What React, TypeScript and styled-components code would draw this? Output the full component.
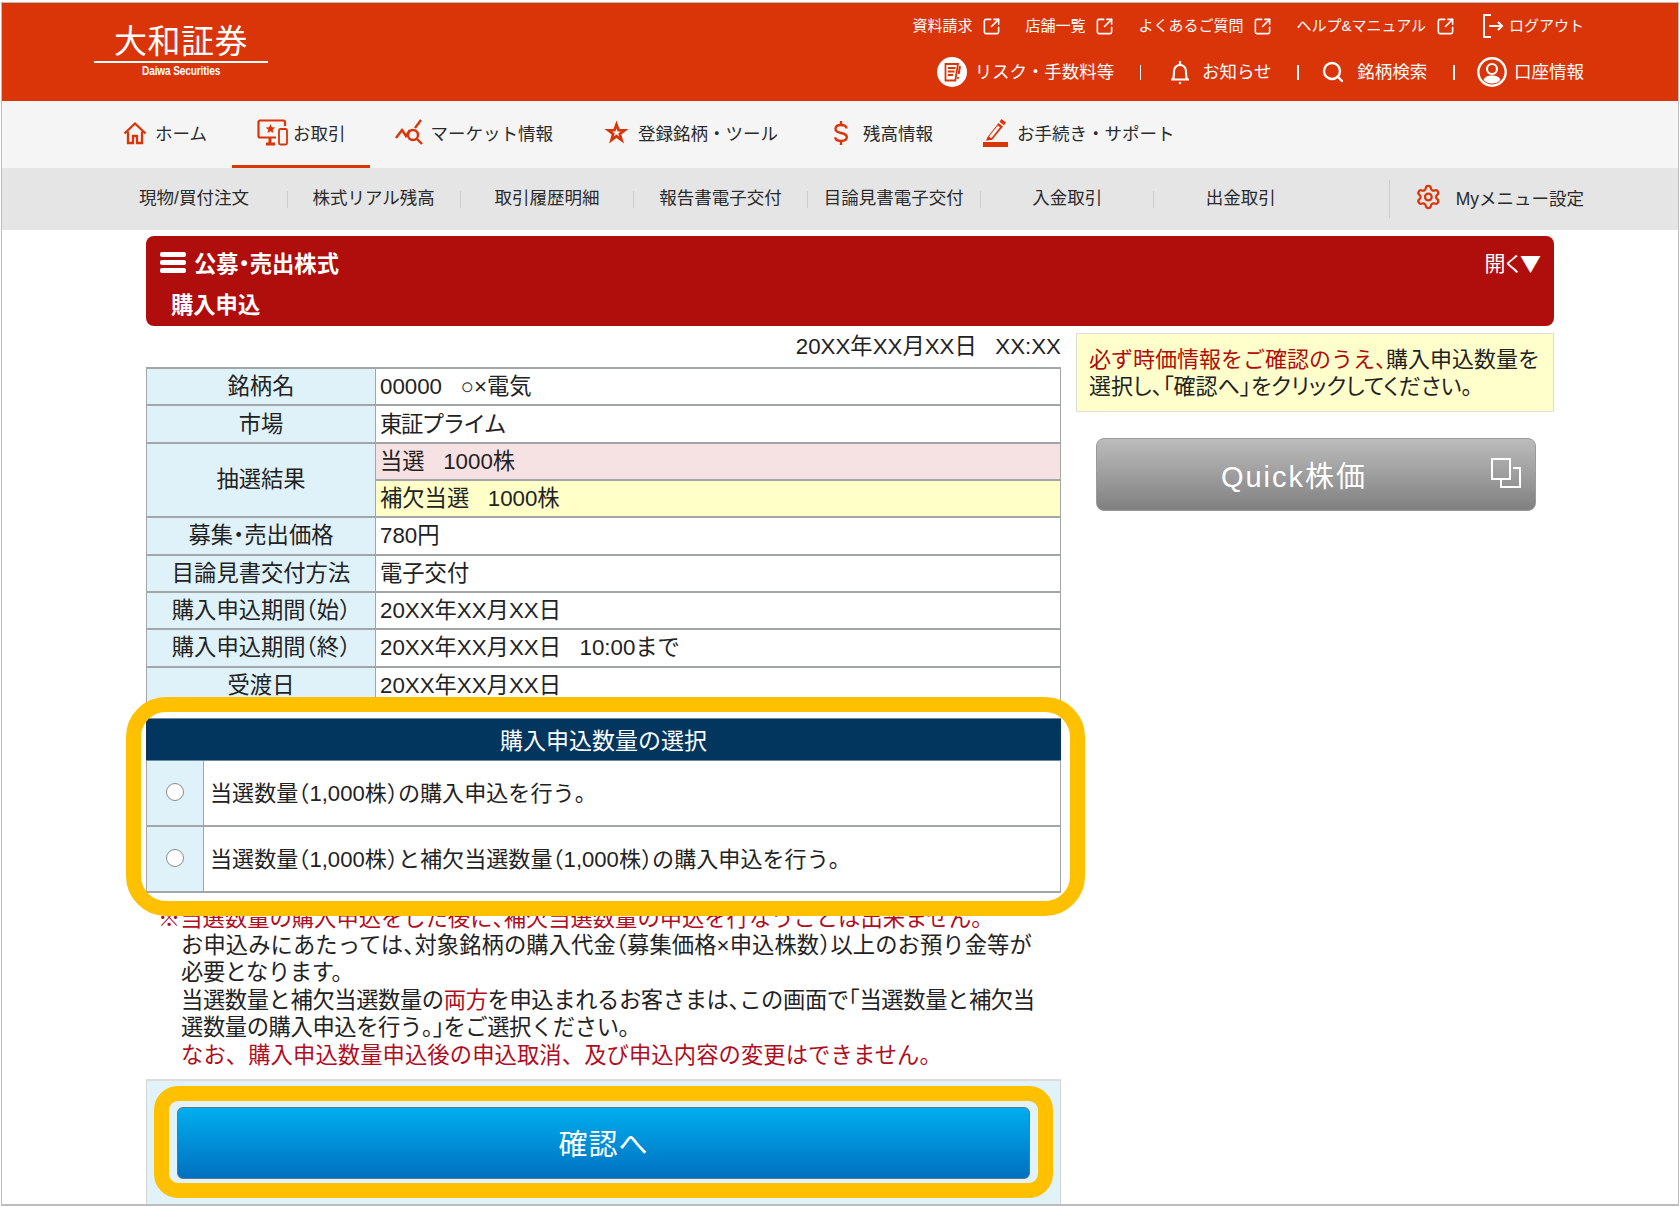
import React from 'react'
import styled, { createGlobalStyle } from 'styled-components'
import { Search, Settings, SquareArrowOutUpRight } from 'lucide-react'

const RED = '#da3409'
const GRID_LINE = '#a3a6a8'
const CJK = '"Noto Sans CJK JP", sans-serif'
const JP = `"Liberation Sans", ${CJK}`

const GlobalStyle = createGlobalStyle`
    html, body {
        margin: 0;
        padding: 0;
        background: #fff;
    }
    body {
        font-family: ${JP};
        color: #222;
    }
`

/* ---------- header ---------- */

const Shell = styled.div`
    box-sizing: border-box;
    width: 1678px;
    height: 1204px;
    margin: 2px 0 0 1px;
    border: 1px solid #bdbdbd;
    border-bottom-width: 2px;
    overflow: hidden;
    background: #fff;
`

const Header = styled.header`
    height: 98px;
    background: ${RED};
    display: flex;
    justify-content: space-between;
    color: #fff;
`

const Logo = styled.div`
    width: 174px;
    margin-left: 92px;
    display: flex;
    flex-direction: column;
    align-items: center;
`

const LogoName = styled.div`
    height: 60px;
    width: 100%;
    text-align: center;
    font-size: 33px;
    line-height: 38px;
    padding-top: 20px;
    box-sizing: border-box;
    letter-spacing: 0.5px;
    border-bottom: 2px solid #fff;
`

const LogoSub = styled.div`
    font-weight: 700;
    font-size: 13px;
    line-height: 14px;
    margin-top: 1px;
    letter-spacing: -0.2px;
    white-space: nowrap;
    transform: scaleX(0.78);
`

const HeaderTools = styled.div`
    display: flex;
    flex-direction: column;
    align-items: flex-end;
    padding: 11px 94px 0 0;
    gap: 19px;
`

const ToolRow = styled.div`
    height: 24px;
    display: flex;
    align-items: center;
`

const UtilRow = styled.div`
    height: 30px;
    display: flex;
    align-items: center;
`

const ToolLink = styled.a<{ $gap?: number; $left?: number }>`
    display: flex;
    align-items: center;
    gap: ${(p) => p.$gap ?? 10}px;
    margin-left: ${(p) => p.$left ?? 24}px;
    font-size: 15px;
    line-height: 22px;
    white-space: nowrap;
`

const UtilLink = styled.a<{ $gap: number; $left?: number }>`
    display: flex;
    align-items: center;
    gap: ${(p) => p.$gap}px;
    margin-left: ${(p) => p.$left ?? 0}px;
    font-size: 17.5px;
    line-height: 24px;
    white-space: nowrap;
`

const UtilSep = styled.span`
    width: 1.5px;
    height: 15px;
    background: #fff;
    margin: 0 22.5px 0 25.7px;
`

/* ---------- main nav ---------- */

const Nav = styled.nav`
    height: 67px;
    background: #f5f5f5;
    display: flex;
    padding-left: 96px;
`

const NavItem = styled.a<{ $active?: boolean; $gap: number; $left?: number }>`
    box-sizing: border-box;
    height: 67px;
    display: flex;
    align-items: center;
    padding: 0 25px 1px;
    margin-left: ${(p) => p.$left ?? 0}px;
    gap: ${(p) => p.$gap}px;
    font-size: 17.5px;
    color: #2a2a2a;
    white-space: nowrap;
    border-bottom: 3px solid ${(p) => (p.$active ? RED : 'transparent')};
`

/* ---------- sub nav ---------- */

const SubNav = styled.div`
    height: 62px;
    background: #e5e5e5;
    display: flex;
    align-items: center;
    justify-content: space-between;
    padding-left: 99.5px;
    padding-right: 94px;
`

const SubGrid = styled.div`
    display: grid;
    grid-template-columns: 185px repeat(6, 173.4px);
`

const SubCell = styled.a`
    height: 17px;
    line-height: 15px;
    font-size: 17.5px;
    text-align: center;
    color: #2a2a2a;
    white-space: nowrap;
    & + & {
        border-left: 1px solid #cdcdcd;
    }
`

const MenuSetting = styled.a`
    width: 195px;
    height: 38px;
    box-sizing: border-box;
    border-left: 1px solid #cdcdcd;
    display: flex;
    align-items: center;
    padding: 0 0 4px 25px;
    gap: 14px;
    font-size: 17.5px;
    white-space: nowrap;
    color: #2a2a2a;
`

/* ---------- page body ---------- */

const Content = styled.main`
    width: 1408px;
    margin: 6px 0 0 144px;
`

const TitleBar = styled.div`
    height: 90px;
    box-sizing: border-box;
    background: #b00d0d;
    border-radius: 8px;
    color: #fff;
    padding: 12px 13px 0 14px;
    font-weight: 700;
`

const TitleTop = styled.div`
    display: flex;
    align-items: center;
    justify-content: space-between;
    height: 28px;
    font-size: 22.3px;
`

const TitleName = styled.div`
    display: flex;
    align-items: center;
    gap: 8px;
`

const TitleToggle = styled.span`
    font-family: ${CJK};
    font-size: 21px;
    font-weight: 400;
`

const ToggleLabel = styled.span`
    font-feature-settings: "palt";
`

const TitleSub = styled.div`
    margin: 16px 0 0 11px;
    font-size: 22.3px;
    line-height: 28px;
`

const Columns = styled.div`
    display: grid;
    grid-template-columns: 915px 478px;
    gap: 15px;
`

const LeftColumn = styled.div`
    min-width: 0;
`

const Stamp = styled.div`
    height: 41px;
    text-align: right;
    font-size: 22.3px;
    line-height: 41px;
    white-space: pre;
`

const InfoGrid = styled.div`
    display: grid;
    grid-template-columns: 228px 1fr;
    grid-auto-rows: 35.33px;
    gap: 2px 1px;
    padding: 0 1px;
    border-top: 2px solid ${GRID_LINE};
    background: ${GRID_LINE};
    height: 335px;
    overflow: hidden;
`

const InfoLabel = styled.div<{ $span?: number }>`
    grid-row: span ${(p) => p.$span ?? 1};
    background: #e0f2f9;
    display: flex;
    align-items: center;
    justify-content: center;
    font-size: 22.3px;
    padding-bottom: 5px;
`

const InfoValue = styled.div<{ $bg?: string; $track?: number }>`
    background: ${(p) => p.$bg ?? '#fff'};
    display: flex;
    align-items: center;
    padding: 0 0 5px 4px;
    font-size: 22.3px;
    letter-spacing: ${(p) => p.$track ?? 0}px;
    white-space: pre;
`

const Picker = styled.section`
    position: relative;
    margin-top: 14px;
`

const PickerHead = styled.div`
    height: 43px;
    background: #02365f;
    color: #fff;
    border-top: 1px solid #6f8aa0;
    box-sizing: border-box;
    border-bottom: 1px solid #6f8aa0;
    display: flex;
    align-items: center;
    justify-content: center;
    font-size: 23px;
    padding-bottom: 2px;
`

const PickerRow = styled.label`
    height: 66px;
    box-sizing: border-box;
    display: grid;
    grid-template-columns: 57px 1fr;
    border: solid ${GRID_LINE};
    border-width: 0 1px 2px 1px;
`

const PickerRadioCell = styled.div`
    background: #e0f2f9;
    border-right: 1px solid ${GRID_LINE};
    display: flex;
    align-items: center;
    justify-content: center;
    padding-bottom: 3px;
`

const Radio = styled.input.attrs({ type: 'radio', name: 'qty' })`
    appearance: none;
    box-sizing: border-box;
    width: 18px;
    height: 18px;
    margin: 0;
    border-radius: 50%;
    background: #fff;
    border: 1.5px solid #8a8a8a;
`

const PickerText = styled.div`
    display: flex;
    align-items: center;
    padding: 0 0 5px 6px;
    font-size: 22.1px;
    white-space: pre;
`

const HighlightFrame = styled.div<{ $top: number; $right: number; $bottom: number; $left: number; $radius: number }>`
    position: absolute;
    top: ${(p) => p.$top}px;
    right: ${(p) => p.$right}px;
    bottom: ${(p) => p.$bottom}px;
    left: ${(p) => p.$left}px;
    border: 15px solid #ffc000;
    border-radius: ${(p) => p.$radius}px;
    pointer-events: none;
    z-index: 2;
`

const Notes = styled.div`
    margin-top: 11.5px;
    padding-left: 35px;
    font-size: 22.3px;
    line-height: 27.4px;
    white-space: nowrap;
`

const NoteLine = styled.div<{ $track?: number; $warn?: boolean; $hang?: boolean }>`
    letter-spacing: ${(p) => p.$track ?? 0}px;
    margin-left: ${(p) => (p.$hang ? -23 : 0)}px;
    color: ${(p) => (p.$warn ? '#b00d1e' : 'inherit')};
`

const Warn = styled.span`
    color: #b00d1e;
`

const ConfirmPanel = styled.div`
    position: relative;
    height: 126px;
    margin-top: 10.5px;
    box-sizing: border-box;
    background: #e1f2f8;
    border-top: 2px solid #dcdcdc;
    border-left: 1px solid #d5d5d5;
    border-right: 1px solid #d5d5d5;
    padding: 26px 30px 0;
`

const ConfirmButton = styled.button`
    display: block;
    width: 100%;
    height: 72px;
    padding: 0 0 3px;
    border: 1px solid #5d7690;
    border-radius: 6px;
    background: linear-gradient(#00aeef, #0070c0);
    color: #fff;
    font-family: ${JP};
    font-size: 29px;
    letter-spacing: 1px;
`

const Guide = styled.aside`
    display: flex;
    flex-direction: column;
    padding-top: 7px;
`

const GuideBox = styled.div`
    box-sizing: border-box;
    height: 79px;
    padding: 12px 0 0 12px;
    background: #ffc;
    border: 1px solid #dedede;
    font-size: 22px;
    line-height: 27px;
    white-space: nowrap;
`

const GuideAccent = styled.span`
    color: #b00d0d;
`

const GuideFit = styled.span`
    font-feature-settings: "palt";
`

const QuickButton = styled.button`
    position: relative;
    box-sizing: border-box;
    width: 440px;
    height: 73px;
    margin: 26px 0 0 20px;
    padding: 0 44px 2px 0;
    border: 1px solid #9a9a9a;
    border-radius: 8px;
    background: linear-gradient(#bcbcbc, #808080);
    color: #fff;
    font-family: ${JP};
    font-size: 29px;
    letter-spacing: 2px;
`

const QuickIcon = styled.svg`
    position: absolute;
    top: 19px;
    right: 14px;
`

const Punct = styled.span`
    font-feature-settings: "halt";
`

// full width punctuation sits on half an em in the reference
const tight = (text: string) =>
    text.split(/([、。（）「」・])/).map((part, i) =>
        i % 2 ? <Punct key={i}>{part}</Punct> : part
    )

/* ---------- drawn icons ---------- */

const HomeIcon = () => (
    <svg width="24" height="24" viewBox="0 0 24 24" fill="none" stroke={RED} strokeWidth="2.3">
        <path d="M1.500 12.500 12 2.500l10.500 10" />
        <path d="M5 10.500V22h5v-7h4v7h5V10.500" />
    </svg>
)

const TradeIcon = () => (
    <svg width="31" height="27" viewBox="0 0 31 27" fill="none" stroke={RED} strokeWidth="2.2">
        <path d="M28 7V3a1.500 1.500 0 0 0-1.500-1.500H3A1.500 1.500 0 0 0 1.500 3v14A1.500 1.500 0 0 0 3 18.500h16" />
        <path d="M9 25h9M13 19v6" strokeWidth="3" />
        <rect x="22" y="10" width="8" height="15.500" rx="1.500" strokeWidth="1.800" />
        <path d="m13.500 5 1.400 3.200 3.400.3-2.600 2.200.8 3.400-3-1.800-3 1.800.8-3.400-2.600-2.200 3.400-.3z" fill={RED} stroke="none" />
    </svg>
)

const MarketIcon = () => (
    <svg width="29" height="27" viewBox="0 0 29 27" fill="none" stroke={RED} strokeWidth="2.400">
        <path d="M1 19 7 11l4 6 4-6" />
        <path d="M20 9 26 1" />
        <circle cx="18" cy="16" r="5" />
        <path d="m22 20 5 5" />
    </svg>
)

const StarIcon = () => (
    <svg width="25" height="25" viewBox="0 0 25 25">
        <path d="m12.500.5 3 8.500h9l-7.200 5.500 2.700 9-7.500-5.400L5 23.500l2.700-9L.5 9h9z" fill={RED} />
        <path d="m12.500 8.500 1.200 3h3.100l-2.500 1.900.9 3-2.700-1.800-2.700 1.800.9-3-2.500-1.900h3.100z" fill="#f5f5f5" />
    </svg>
)

const DollarIcon = () => (
    <svg width="14" height="26" viewBox="0 0 14 26" fill="none" stroke={RED} strokeWidth="2.400">
        <path d="M7 1v4M7 21v4" />
        <path d="M12.500 8.500C12.500 6.300 10.200 5 7 5S1.500 6.500 1.500 9c0 2.800 2.700 3.400 5.500 4s5.800 1.300 5.800 4c0 2.500-2.500 4-5.800 4s-5.700-1.400-5.700-3.700" />
    </svg>
)

const PenIcon = () => (
    <svg width="25" height="28" viewBox="0 0 25 28" fill={RED}>
        <rect x="0" y="23" width="25" height="5" />
        <path d="M18.500 0 23 3.500l-2 2.700-4.500-3.500zM15.500 4l4.500 3.500L9 21l-6 .5L4.500 18z" />
        <path d="m6 17.500 2.300 1.800 8.700-11-2.200-1.800z" fill="#f5f5f5" />
    </svg>
)

const ReportIcon = () => (
    <svg width="30" height="30" viewBox="0 0 30 30">
        <circle cx="15" cy="15" r="15" fill="#fff" />
        <path d="M8.500 7h12.500l-2.700 16.500H8.500z M11 11h7.500 M11 14.500h6.500 M11 18h5" fill="none" stroke={RED} strokeWidth="1.800" />
        <path d="M23 9l-1.300 8M21 20v1.700" stroke={RED} strokeWidth="2" />
    </svg>
)

const BellIcon = () => (
    <svg width="20" height="26" viewBox="0 0 20 26" fill="none" stroke="#fff" strokeWidth="2.200">
        <path d="M1 20.500h18M3 20.500c1-2.500 1-5 1-8.500a6 6 0 0 1 12 0c0 3.500 0 6 1 8.500" />
        <path d="M10 2v4" />
        <circle cx="10" cy="24" r="1.200" fill="#fff" stroke="none" />
    </svg>
)

const AccountIcon = () => (
    <svg width="30" height="30" viewBox="0 0 30 30" fill="none" stroke="#fff">
        <circle cx="15" cy="15" r="13.700" strokeWidth="2.400" />
        <circle cx="15" cy="12" r="5" strokeWidth="2.200" />
        <path d="M6.500 23c1.500-3.500 4.500-4.500 8.500-4.500s7 1 8.500 4.500a12 12 0 0 1-17 0z" fill="#fff" stroke="none" />
    </svg>
)

const LogoutIcon = () => (
    <svg width="22" height="24" viewBox="0 0 22 24" fill="none" stroke="#fff" strokeWidth="2">
        <path d="M9 1H2v22h7" />
        <path d="M7 12h13M16 8l4 4-4 4" />
    </svg>
)

const MenuIcon = () => (
    <svg width="26" height="21" viewBox="0 0 26 21" fill="#fff">
        <rect width="26" height="5" rx="2" />
        <rect y="8" width="26" height="5" rx="2" />
        <rect y="16" width="26" height="5" rx="2" />
    </svg>
)

const toolLinks = ['資料請求', '店舗一覧', 'よくあるご質問', 'ヘルプ&マニュアル']
const subLinks = ['現物/買付注文', '株式リアル残高', '取引履歴明細', '報告書電子交付', '目論見書電子交付', '入金取引', '出金取引']

const App = () => {
    return (
        <>
            <GlobalStyle />
            <Shell>
                <Header>
                    <Logo>
                        <LogoName>大和証券</LogoName>
                        <LogoSub>Daiwa Securities</LogoSub>
                    </Logo>
                    <HeaderTools>
                        <ToolRow>
                            {toolLinks.map((label) => (
                                <ToolLink key={label}>
                                    {label}
                                    <SquareArrowOutUpRight size={19} strokeWidth={2} />
                                </ToolLink>
                            ))}
                            <ToolLink $gap={5} $left={27}>
                                <LogoutIcon />
                                ログアウト
                            </ToolLink>
                        </ToolRow>
                        <UtilRow>
                            <UtilLink $gap={8}><ReportIcon />リスク・手数料等</UtilLink>
                            <UtilSep />
                            <UtilLink $gap={12} $left={6}><BellIcon />お知らせ</UtilLink>
                            <UtilSep />
                            <UtilLink $gap={12}><Search size={24} strokeWidth={2.4} />銘柄検索</UtilLink>
                            <UtilSep />
                            <UtilLink $gap={7}><AccountIcon />口座情報</UtilLink>
                        </UtilRow>
                    </HeaderTools>
                </Header>

                <Nav>
                    <NavItem $gap={8}><HomeIcon />ホーム</NavItem>
                    <NavItem $gap={5} $active><TradeIcon />お取引</NavItem>
                    <NavItem $gap={6}><MarketIcon />マーケット情報</NavItem>
                    <NavItem $gap={9} $left={1}><StarIcon />登録銘柄・ツール</NavItem>
                    <NavItem $gap={15} $left={6}><DollarIcon />残高情報</NavItem>
                    <NavItem $gap={9}><PenIcon />お手続き・サポート</NavItem>
                </Nav>

                <SubNav>
                    <SubGrid>
                        {subLinks.map((label) => (
                            <SubCell key={label}>{label}</SubCell>
                        ))}
                    </SubGrid>
                    <MenuSetting>
                        <Settings size={28} color={RED} strokeWidth={2} />
                        Myメニュー設定
                    </MenuSetting>
                </SubNav>

                <Content>
                    <TitleBar>
                        <TitleTop>
                            <TitleName><MenuIcon /><span>{tight('公募・売出株式')}</span></TitleName>
                            <TitleToggle><ToggleLabel>開く</ToggleLabel>▼</TitleToggle>
                        </TitleTop>
                        <TitleSub>購入申込</TitleSub>
                    </TitleBar>

                    <Columns>
                        <LeftColumn>
                            <Stamp>{'20XX年XX月XX日   XX:XX'}</Stamp>
                            <InfoGrid>
                                <InfoLabel>銘柄名</InfoLabel>
                                <InfoValue>{'00000   ○×電気'}</InfoValue>
                                <InfoLabel>市場</InfoLabel>
                                <InfoValue $track={-1.4}>東証プライム</InfoValue>
                                <InfoLabel $span={2}>抽選結果</InfoLabel>
                                <InfoValue $bg="#f6e1e3">{'当選   1000株'}</InfoValue>
                                <InfoValue $bg="#ffffc8">{'補欠当選   1000株'}</InfoValue>
                                <InfoLabel><span>{tight('募集・売出価格')}</span></InfoLabel>
                                <InfoValue>780円</InfoValue>
                                <InfoLabel>目論見書交付方法</InfoLabel>
                                <InfoValue>電子交付</InfoValue>
                                <InfoLabel><span>{tight('購入申込期間（始）')}</span></InfoLabel>
                                <InfoValue>20XX年XX月XX日</InfoValue>
                                <InfoLabel><span>{tight('購入申込期間（終）')}</span></InfoLabel>
                                <InfoValue>{'20XX年XX月XX日   10:00まで'}</InfoValue>
                                <InfoLabel>受渡日</InfoLabel>
                                <InfoValue>20XX年XX月XX日</InfoValue>
                            </InfoGrid>

                            <Picker>
                                <PickerHead>購入申込数量の選択</PickerHead>
                                <PickerRow>
                                    <PickerRadioCell><Radio /></PickerRadioCell>
                                    <PickerText><span>{tight('当選数量（1,000株）の購入申込を行う。')}</span></PickerText>
                                </PickerRow>
                                <PickerRow>
                                    <PickerRadioCell><Radio /></PickerRadioCell>
                                    <PickerText><span>{tight('当選数量（1,000株）と補欠当選数量（1,000株）の購入申込を行う。')}</span></PickerText>
                                </PickerRow>
                                <HighlightFrame $top={-21} $right={-24} $bottom={-23} $left={-20} $radius={40} />
                            </Picker>

                            <Notes>
                                <NoteLine $hang $warn>{tight('※当選数量の購入申込をした後に、補欠当選数量の申込を行なうことは出来ません。')}</NoteLine>
                                <NoteLine $track={0.08}>{tight('お申込みにあたっては、対象銘柄の購入代金（募集価格×申込株数）以上のお預り金等が')}</NoteLine>
                                <NoteLine $track={-0.4}>必要となります。</NoteLine>
                                <NoteLine $track={-0.4}>当選数量と補欠当選数量の<Warn>両方</Warn>{tight('を申込まれるお客さまは、この画面で「当選数量と補欠当')}</NoteLine>
                                <NoteLine $track={-0.4}>{tight('選数量の購入申込を行う。」をご選択ください。')}</NoteLine>
                                <NoteLine $warn $track={0.1}>なお、購入申込数量申込後の申込取消、及び申込内容の変更はできません。</NoteLine>
                            </Notes>

                            <ConfirmPanel>
                                <ConfirmButton>確認へ</ConfirmButton>
                                <HighlightFrame $top={5} $right={7} $bottom={7} $left={7} $radius={24} />
                            </ConfirmPanel>
                        </LeftColumn>

                        <Guide>
                            <GuideBox>
                                <GuideAccent>{tight('必ず時価情報をご確認のうえ、')}</GuideAccent>購入申込数量を<br />
                                <GuideFit>選択し、「確認へ」をクリックしてください。</GuideFit>
                            </GuideBox>
                            <QuickButton>
                                Quick株価
                                <QuickIcon width="30" height="30" viewBox="0 0 30 30" fill="none" stroke="#fff" strokeWidth="2">
                                    <rect x="1" y="1" width="18" height="20" />
                                    <path d="M22 10h7v19H10v-8" />
                                </QuickIcon>
                            </QuickButton>
                        </Guide>
                    </Columns>
                </Content>
            </Shell>
        </>
    )
}

export default App
